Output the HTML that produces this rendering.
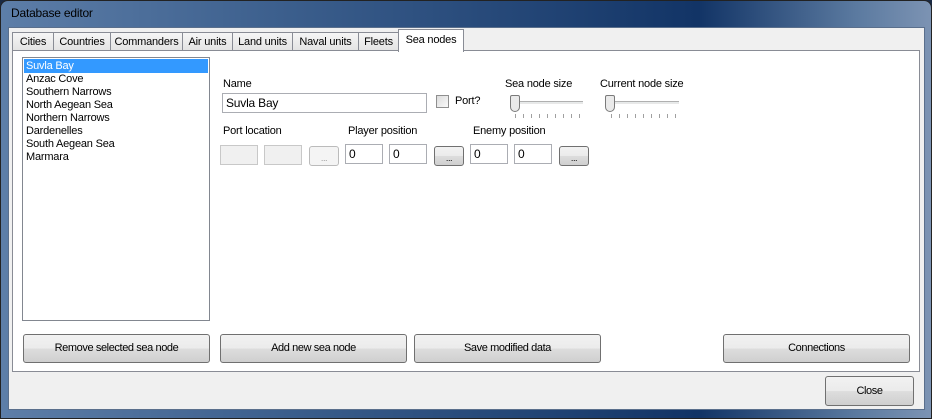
<!DOCTYPE html>
<html><head><style>
body{margin:0;width:932px;height:419px;overflow:hidden;background:#1a2a44;font-family:"Liberation Sans",sans-serif;font-size:11px;color:#000;position:relative;letter-spacing:-0.2px}
.a{position:absolute;box-sizing:border-box}
.frame{left:0;top:0;width:932px;height:419px;border-radius:8px 8px 0 0;background:linear-gradient(90deg,#5d7ea8 0%,#3c5f8d 30%,#123466 75%,#5b7aa0 92%,#7c93b3 100%);border:1px solid #222}
.client{left:8px;top:27px;width:917px;height:383px;background:#f0f0f0;border:1px solid #5a6f8c}
.tab{top:32px;height:19px;background:linear-gradient(#f6f6f6,#e2e2e2);border:1px solid #898c95;border-bottom:none;text-align:center;line-height:18px}
.page{left:12px;top:50px;width:908px;height:322px;background:#fff;border:1px solid #898c95}
.tb{background:#fff;border:1px solid #abadb3;height:20px;line-height:18px;padding-left:3px}
.dis{background:#f0f0f0;border:1px solid #c8c8c8}
.btn{border:1px solid #707070;border-radius:3px;background:linear-gradient(#f2f2f2 0%,#ebebeb 50%,#dddddd 51%,#cfcfcf 100%);text-align:center;font-size:11px;letter-spacing:-0.4px}
.sl{height:3px;border-top:1px solid #b0b0b0;border-bottom:1px solid #e8e8e8;background:#e7eaea}
.ticks{height:4px;background:repeating-linear-gradient(90deg,#a0a0a0 0 1px,transparent 1px 8px)}
</style></head><body>
<div class="a frame"></div>
<div class="a" style="left:11px;top:6px;color:#000;font-size:12px">Database editor</div>
<div class="a client"></div>
<div class="a tab" style="left:12px;width:42px">Cities</div>
<div class="a tab" style="left:53px;width:58px">Countries</div>
<div class="a tab" style="left:110px;width:73px">Commanders</div>
<div class="a tab" style="left:182px;width:51px">Air units</div>
<div class="a tab" style="left:232px;width:61px">Land units</div>
<div class="a tab" style="left:292px;width:67px">Naval units</div>
<div class="a tab" style="left:358px;width:41px">Fleets</div>
<div class="a page"></div>
<div class="a tab" style="left:398px;top:29px;height:23px;width:66px;background:#fff;z-index:2;line-height:20px">Sea nodes</div>
<div class="a" style="left:22px;top:57px;width:188px;height:264px;border:1px solid #828790;background:#fff"></div>
<div class="a" style="left:24px;top:59px;width:184px;height:14px;background:#3399ff"></div>
<div class="a" style="left:26px;top:60px;line-height:13px">
<div style="color:#fff">Suvla Bay</div><div>Anzac Cove</div><div>Southern Narrows</div><div>North Aegean Sea</div><div>Northern Narrows</div><div>Dardenelles</div><div>South Aegean Sea</div><div>Marmara</div></div>
<div class="a" style="left:223px;top:78px">Name</div>
<div class="a tb" style="left:222px;top:93px;width:205px;font-size:12px">Suvla Bay</div>
<div class="a" style="left:436px;top:95px;width:13px;height:13px;border:1px solid #8f8f8f;background:linear-gradient(135deg,#dcdcdc,#fafafa)"></div>
<div class="a" style="left:455px;top:95px">Port?</div>
<div class="a" style="left:505px;top:78px">Sea node size</div>
<div class="a" style="left:600px;top:78px">Current node size</div>
<div class="a sl" style="left:512px;top:101px;width:71px"></div>
<div class="a sl" style="left:607px;top:101px;width:72px"></div>
<div class="a" style="left:510px;top:95px;width:10px;height:17px;border:1px solid #7a7a7a;border-radius:2px 2px 5px 5px;background:#eaeaea"></div>
<div class="a" style="left:605px;top:95px;width:10px;height:17px;border:1px solid #7a7a7a;border-radius:2px 2px 5px 5px;background:#eaeaea"></div>
<div class="a ticks" style="left:515px;top:114px;width:68px"></div>
<div class="a ticks" style="left:611px;top:114px;width:68px"></div>
<div class="a" style="left:223px;top:125px">Port location</div>
<div class="a" style="left:348px;top:125px">Player position</div>
<div class="a" style="left:473px;top:125px">Enemy position</div>
<div class="a dis" style="left:220px;top:145px;width:38px;height:20px"></div>
<div class="a dis" style="left:264px;top:145px;width:38px;height:20px"></div>
<div class="a btn" style="left:309px;top:146px;width:30px;height:20px;color:#999;border-color:#bbb;background:#f4f4f4;line-height:22px;font-size:9px">...</div>
<div class="a tb" style="left:345px;top:144px;width:38px;font-size:12px">0</div>
<div class="a tb" style="left:389px;top:144px;width:38px;font-size:12px">0</div>
<div class="a btn" style="left:434px;top:146px;width:30px;height:20px;line-height:22px;font-size:9px">...</div>
<div class="a tb" style="left:470px;top:144px;width:38px;font-size:12px">0</div>
<div class="a tb" style="left:514px;top:144px;width:38px;font-size:12px">0</div>
<div class="a btn" style="left:559px;top:146px;width:30px;height:20px;line-height:22px;font-size:9px">...</div>
<div class="a btn" style="left:23px;top:334px;width:187px;height:29px;line-height:27px">Remove selected sea node</div>
<div class="a btn" style="left:220px;top:334px;width:187px;height:29px;line-height:27px">Add new sea node</div>
<div class="a btn" style="left:414px;top:334px;width:187px;height:29px;line-height:27px">Save modified data</div>
<div class="a btn" style="left:723px;top:334px;width:187px;height:29px;line-height:27px">Connections</div>
<div class="a btn" style="left:825px;top:376px;width:89px;height:30px;line-height:28px">Close</div>
</body></html>
